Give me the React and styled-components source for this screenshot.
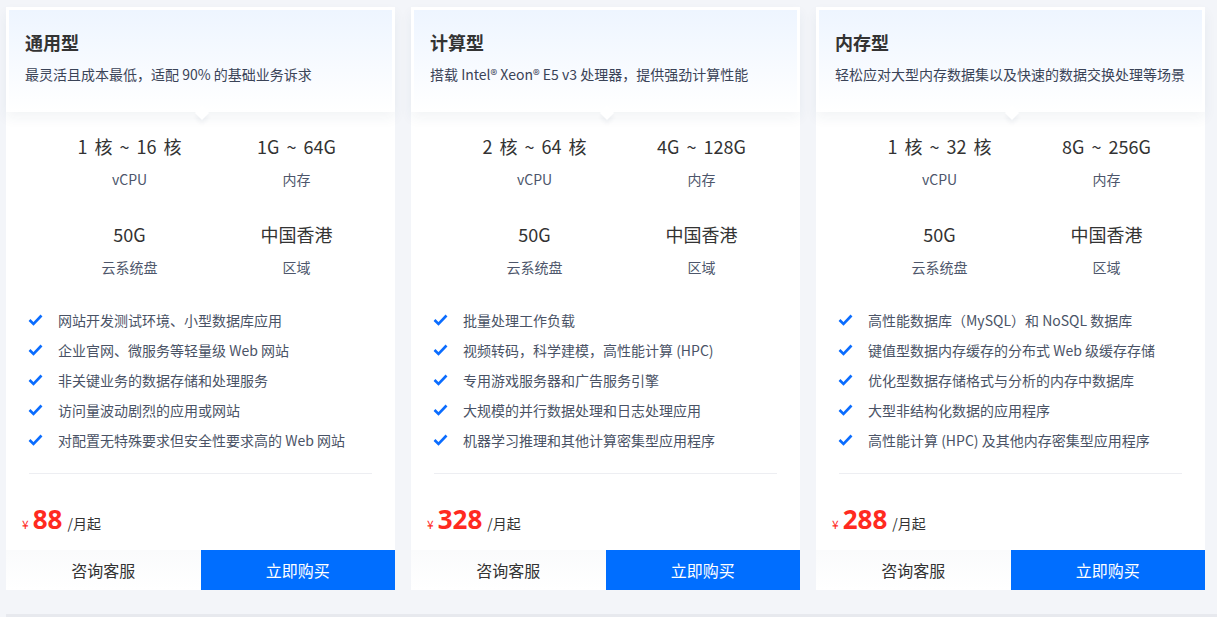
import styled, { createGlobalStyle } from 'styled-components'

const GlobalStyle = createGlobalStyle`
  html, body {
    margin: 0;
    padding: 0;
    background: #f3f5f9;
    font-family: "Noto Sans CJK SC", "Noto Sans", "Liberation Sans", sans-serif;
  }
`;

const Page = styled.div`
  width: 1217px;
  height: 617px;
  overflow: hidden;
  position: relative;
`;

const CardRow = styled.div`
  display: flex;
  gap: 16px;
  padding: 7px 0 0 6px;
`;

const Card = styled.div`
  width: 389px;
  background: #fff;
  display: flex;
  flex-direction: column;
`;

const Header = styled.div`
  position: relative;
  height: 105px;
  box-sizing: border-box;
  border: 3px solid #fff;
  border-bottom: none;
  padding: 19px 0 0 16px;
  background: linear-gradient(180deg, #eef5ff 0%, #ffffff 100%);
  box-shadow: 0 6px 12px rgba(40, 60, 100, 0.06);
  z-index: 1;

  &::after {
    content: "";
    position: absolute;
    left: 188px;
    bottom: -6px;
    width: 10px;
    height: 10px;
    background: #fff;
    transform: rotate(45deg);
    box-shadow: 3px 3px 4px rgba(40, 60, 100, 0.05);
  }
`;

const Title = styled.h2`
  margin: 0;
  font-size: 18px;
  font-weight: 700;
  color: #333;
  line-height: 26px;
`;

const Desc = styled.p`
  margin: 9px 0 0;
  font-size: 14px;
  line-height: 20px;
  color: #3a4357;
  white-space: nowrap;
`;

const Specs = styled.div`
  display: grid;
  grid-template-columns: 167px 167px;
  row-gap: 32px;
  padding: 21px 0 0 40px;
`;

const Spec = styled.div`
  text-align: center;
`;

const SpecValue = styled.div`
  font-size: 18px;
  line-height: 26px;
  color: #333;
  word-spacing: 3px;
`;

const SpecLabel = styled.div`
  margin-top: 10px;
  font-size: 14px;
  line-height: 20px;
  color: #4d566b;
`;

const Features = styled.ul`
  list-style: none;
  margin: 28px 0 0;
  padding: 0 0 0 22px;
`;

const Feature = styled.li`
  display: flex;
  align-items: center;
  height: 30px;
  font-size: 14px;
  color: #4a5366;
  gap: 15px;
`;

const Divider = styled.div`
  margin: 18px 23px 0;
  height: 1px;
  background: #edeef2;
`;

const PriceRow = styled.div`
  display: flex;
  align-items: baseline;
  height: 40px;
  margin-top: 25px;
  padding-left: 16px;
  line-height: 40px;
`;

const Yen = styled.span`
  font-size: 12px;
  color: #ff2a1f;
  margin-right: 4px;
`;

const Amount = styled.span`
  font-size: 26px;
  font-weight: 700;
  color: #ff2a1f;
  font-family: "Noto Sans", "Liberation Sans", sans-serif;
  margin-right: 5px;
`;

const Unit = styled.span`
  font-size: 14px;
  color: #333;
`;

const Actions = styled.div`
  display: flex;
  margin-top: 11px;
  height: 40px;
  background: linear-gradient(180deg, #fafbfc, #fff);
`;

const Button = styled.button`
  flex: 1;
  border: none;
  margin: 0;
  padding: 0;
  font-family: inherit;
  font-size: 16px;
  cursor: pointer;
  background: ${p => (p.$primary ? '#006eff' : 'transparent')};
  color: ${p => (p.$primary ? '#fff' : '#333')};
`;

const BottomStrip = styled.div`
  position: absolute;
  left: 6px;
  right: 0;
  bottom: 0;
  height: 3px;
  background: #e7e9ee;
`;

const Check = () => (
  <svg width="15" height="12" viewBox="0 0 15 12">
    <polyline points="1.5,6 5.5,10 13.5,1.5" fill="none" stroke="#0a6cff" strokeWidth="2.6" strokeLinejoin="miter" />
  </svg>
);

const plans = [
  {
    title: '通用型',
    desc: '最灵活且成本最低，适配 90% 的基础业务诉求',
    cpu: '1 核 ~ 16 核',
    mem: '1G ~ 64G',
    price: '88',
    features: [
      '网站开发测试环境、小型数据库应用',
      '企业官网、微服务等轻量级 Web 网站',
      '非关键业务的数据存储和处理服务',
      '访问量波动剧烈的应用或网站',
      '对配置无特殊要求但安全性要求高的 Web 网站',
    ],
  },
  {
    title: '计算型',
    desc: '搭载 Intel® Xeon® E5 v3 处理器，提供强劲计算性能',
    cpu: '2 核 ~ 64 核',
    mem: '4G ~ 128G',
    price: '328',
    features: [
      '批量处理工作负载',
      '视频转码，科学建模，高性能计算 (HPC)',
      '专用游戏服务器和广告服务引擎',
      '大规模的并行数据处理和日志处理应用',
      '机器学习推理和其他计算密集型应用程序',
    ],
  },
  {
    title: '内存型',
    desc: '轻松应对大型内存数据集以及快速的数据交换处理等场景',
    cpu: '1 核 ~ 32 核',
    mem: '8G ~ 256G',
    price: '288',
    features: [
      '高性能数据库（MySQL）和 NoSQL 数据库',
      '键值型数据内存缓存的分布式 Web 级缓存存储',
      '优化型数据存储格式与分析的内存中数据库',
      '大型非结构化数据的应用程序',
      '高性能计算 (HPC) 及其他内存密集型应用程序',
    ],
  },
];

export default function App() {
  return (
    <Page>
      <GlobalStyle />
      <CardRow>
        {plans.map(plan => (
          <Card key={plan.title}>
            <Header>
              <Title>{plan.title}</Title>
              <Desc>{plan.desc}</Desc>
            </Header>
            <Specs>
              <Spec>
                <SpecValue>{plan.cpu}</SpecValue>
                <SpecLabel>vCPU</SpecLabel>
              </Spec>
              <Spec>
                <SpecValue>{plan.mem}</SpecValue>
                <SpecLabel>内存</SpecLabel>
              </Spec>
              <Spec>
                <SpecValue>50G</SpecValue>
                <SpecLabel>云系统盘</SpecLabel>
              </Spec>
              <Spec>
                <SpecValue>中国香港</SpecValue>
                <SpecLabel>区域</SpecLabel>
              </Spec>
            </Specs>
            <Features>
              {plan.features.map(f => (
                <Feature key={f}>
                  <Check />
                  {f}
                </Feature>
              ))}
            </Features>
            <Divider />
            <PriceRow>
              <Yen>¥</Yen>
              <Amount>{plan.price}</Amount>
              <Unit>/月起</Unit>
            </PriceRow>
            <Actions>
              <Button>咨询客服</Button>
              <Button $primary>立即购买</Button>
            </Actions>
          </Card>
        ))}
      </CardRow>
      <BottomStrip />
    </Page>
  )
}
